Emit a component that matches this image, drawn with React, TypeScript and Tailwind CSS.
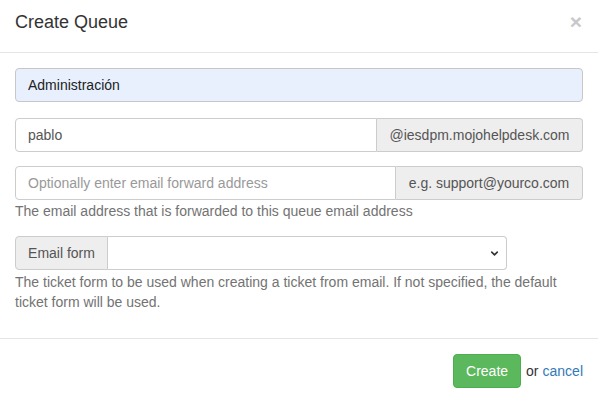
import { ChevronDown } from 'lucide-react';

const font = { fontFamily: '"Liberation Sans", Arial, sans-serif' };

export default function App() {
  return (
    <div className="w-[598px] h-[403px] bg-white text-[14px] leading-[20px] text-[#333] flex flex-col" style={font}>
      {/* header */}
      <div className="h-[53px] border-b border-[#e5e5e5] flex items-center justify-between pl-[15px] pr-[16px] pb-[1px]">
        <h4 className="text-[18px] leading-[26px] font-normal text-[#333] -mt-[7px]">Create Queue</h4>
        <button className="text-[21px] font-bold leading-none text-[#c8c8c8] -mt-[9px]">×</button>
      </div>

      {/* body */}
      <div className="flex-1 px-[15px] pt-[15px] flex flex-col">
        <input
          className="h-[34px] w-full rounded-[4px] border border-[#c7c7c7] bg-[#e8f0fe] px-[12px] text-[14px] text-[#222] outline-none"
          defaultValue="Administración"
        />

        <div className="mt-[16px] flex h-[34px]">
          <input
            className="flex-1 min-w-0 rounded-l-[4px] border border-[#ccc] px-[12px] text-[14px] text-[#555] outline-none"
            defaultValue="pablo"
          />
          <span className="w-[206px] flex items-center justify-center border border-l-0 border-[#ccc] bg-[#eee] rounded-r-[4px] text-[#555]">
            @iesdpm.mojohelpdesk.com
          </span>
        </div>

        <div className="mt-[14px] flex h-[34px]">
          <input
            className="flex-1 min-w-0 rounded-l-[4px] border border-[#ccc] px-[12px] text-[14px] text-[#555] outline-none placeholder:text-[#999]"
            placeholder="Optionally enter email forward address"
          />
          <span className="w-[187px] flex items-center justify-center border border-l-0 border-[#ccc] bg-[#eee] rounded-r-[4px] text-[#555]">
            e.g. support@yourco.com
          </span>
        </div>
        <p className="mt-[1px] text-[#737373]">The email address that is forwarded to this queue email address</p>

        <div className="mt-[15px] flex h-[34px] w-[492px]">
          <span className="w-[93px] flex items-center justify-center border border-[#ccc] bg-[#eee] rounded-l-[4px] text-[#555]">
            Email form
          </span>
          <div className="relative flex-1 border border-l-0 border-[#ccc] rounded-r-[4px] bg-white">
            <ChevronDown className="absolute right-[6px] top-[11px] text-[#333]" size={11} strokeWidth={3.5} />
          </div>
        </div>
        <p className="mt-[2px] text-[#737373] pr-[10px]">
          The ticket form to be used when creating a ticket from email. If not specified, the default ticket form will be used.
        </p>
      </div>

      {/* footer */}
      <div className="h-[65px] border-t border-[#e5e5e5] flex items-center justify-end pr-[15px] pb-[1px]">
        <button className="h-[34px] px-[12px] rounded-[4px] bg-[#5cb85c] border border-[#4cae4c] text-white text-[14px]">
          Create
        </button>
        <span className="ml-[5px]">or</span>
        <a className="ml-[4px] text-[#337ab7]" href="#">cancel</a>
      </div>
    </div>
  );
}
